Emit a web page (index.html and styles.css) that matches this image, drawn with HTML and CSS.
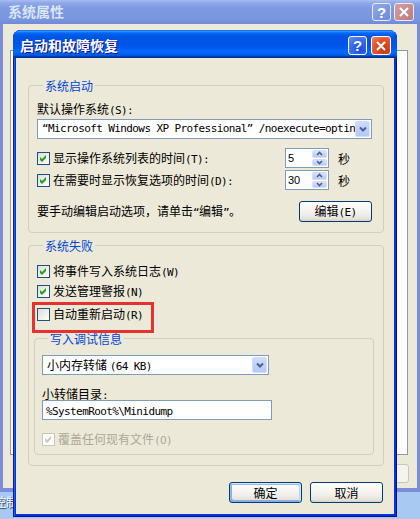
FILE: index.html
```html
<!DOCTYPE html>
<html lang="zh-CN">
<head>
    <meta charset="UTF-8">
    <title>启动和故障恢复</title>
    <link rel="stylesheet" href="styles.css">
</head>
<body>
<div class="desktop">

    <!-- 后面的“系统属性”窗口 (非活动) -->
    <div class="bg-window">
        <div class="bg-titlebar">
            <span class="bg-title">系统属性</span>
            <div class="caption-buttons">
                <span class="cap-btn help">?</span>
                <span class="cap-btn close">
                    <svg width="10" height="10" viewBox="0 0 10 10"><path d="M1 1L9 9M9 1L1 9" stroke="#fff" stroke-width="2"/></svg>
                </span>
            </div>
        </div>
        <div class="bg-client">
            <div class="tab-page"></div>
            <div class="bg-footer"><span class="bg-btn"></span></div>
        </div>
    </div>
    <div class="desk-label">控制面板</div>

    <!-- 启动和故障恢复 对话框 -->
    <div class="dialog">
        <div class="titlebar">
            <span class="title">启动和故障恢复</span>
            <div class="caption-buttons">
                <span class="cap-btn help">?</span>
                <span class="cap-btn close">
                    <svg width="10" height="10" viewBox="0 0 10 10"><path d="M1 1L9 9M9 1L1 9" stroke="#fff" stroke-width="2"/></svg>
                </span>
            </div>
        </div>

        <div class="client">
            <div class="group startup">
                <div class="glabel">系统启动</div>
                <div class="text-line">默认操作系统<span class="en">(S):</span></div>
                <div class="combo wide">
                    <span class="combo-text en">“Microsoft Windows XP Professional” /noexecute=optin</span>
                    <span class="drop-btn">
                        <svg width="8" height="6" viewBox="0 0 8 6"><path d="M1 1.5L4 4.5L7 1.5" fill="none" stroke="#4d6185" stroke-width="2"/></svg>
                    </span>
                </div>

                <div class="row">
                    <span class="cb checked"><svg width="13" height="13" viewBox="0 0 13 13"><polygon points="3,5 5,7 9,3 9,6 5,10 3,8" fill="#21a121"/></svg></span>
                    <span class="row-label">显示操作系统列表的时间<span class="en">(T):</span></span>
                    <span class="spin">
                        <span class="spin-val">5</span>
                        <span class="spin-btns">
                            <span class="spin-btn"><svg width="7" height="5" viewBox="0 0 7 5"><path d="M1 4L3.5 1.5L6 4" fill="none" stroke="#4d6185" stroke-width="1.6"/></svg></span>
                            <span class="spin-btn"><svg width="7" height="5" viewBox="0 0 7 5"><path d="M1 1L3.5 3.5L6 1" fill="none" stroke="#4d6185" stroke-width="1.6"/></svg></span>
                        </span>
                    </span>
                    <span class="unit">秒</span>
                </div>

                <div class="row second">
                    <span class="cb checked"><svg width="13" height="13" viewBox="0 0 13 13"><polygon points="3,5 5,7 9,3 9,6 5,10 3,8" fill="#21a121"/></svg></span>
                    <span class="row-label">在需要时显示恢复选项的时间<span class="en">(D):</span></span>
                    <span class="spin">
                        <span class="spin-val">30</span>
                        <span class="spin-btns">
                            <span class="spin-btn"><svg width="7" height="5" viewBox="0 0 7 5"><path d="M1 4L3.5 1.5L6 4" fill="none" stroke="#4d6185" stroke-width="1.6"/></svg></span>
                            <span class="spin-btn"><svg width="7" height="5" viewBox="0 0 7 5"><path d="M1 1L3.5 3.5L6 1" fill="none" stroke="#4d6185" stroke-width="1.6"/></svg></span>
                        </span>
                    </span>
                    <span class="unit">秒</span>
                </div>

                <div class="row edit-row">
                    <span>要手动编辑启动选项，请单击<span class="en">“</span>编辑<span class="en">”</span>。</span>
                    <button class="btn edit-btn">编辑<span class="en">(E)</span></button>
                </div>
            </div>

            <div class="group failure">
                <div class="glabel">系统失败</div>
                <div class="cb-row first">
                    <span class="cb checked"><svg width="13" height="13" viewBox="0 0 13 13"><polygon points="3,5 5,7 9,3 9,6 5,10 3,8" fill="#21a121"/></svg></span>
                    <span>将事件写入系统日志<span class="en">(W)</span></span>
                </div>
                <div class="cb-row">
                    <span class="cb checked"><svg width="13" height="13" viewBox="0 0 13 13"><polygon points="3,5 5,7 9,3 9,6 5,10 3,8" fill="#21a121"/></svg></span>
                    <span>发送管理警报<span class="en">(N)</span></span>
                </div>
                <div class="cb-row marked">
                    <span class="cb"></span>
                    <span>自动重新启动<span class="en">(R)</span></span>
                </div>

                <div class="group debug">
                    <div class="glabel">写入调试信息</div>
                    <div class="combo small">
                        <span class="combo-text">小内存转储 <span class="en">(64 KB)</span></span>
                        <span class="drop-btn">
                            <svg width="8" height="6" viewBox="0 0 8 6"><path d="M1 1.5L4 4.5L7 1.5" fill="none" stroke="#4d6185" stroke-width="2"/></svg>
                        </span>
                    </div>
                    <div class="text-line dir-label">小转储目录<span class="en">:</span></div>
                    <div class="textbox"><span class="en">%SystemRoot%\Minidump</span></div>
                    <div class="cb-row disabled">
                        <span class="cb checked"><svg width="13" height="13" viewBox="0 0 13 13"><polygon points="3,5 5,7 9,3 9,6 5,10 3,8" fill="#cac8bb"/></svg></span>
                        <span>覆盖任何现有文件<span class="en">(O)</span></span>
                    </div>
                </div>
            </div>

            <div class="dialog-buttons">
                <button class="btn default">确定</button>
                <button class="btn">取消</button>
            </div>
        </div>
    </div>
</div>
</body>
</html>
```

FILE: styles.css
```css
* {
    margin: 0;
    padding: 0;
    box-sizing: border-box;
}

body {
    width: 420px;
    height: 519px;
    overflow: hidden;
    font-family: "Noto Sans CJK SC", sans-serif;
    font-size: 12px;
    line-height: 13px;
    color: #000;
}

.en {
    font-family: "DejaVu Sans Mono", monospace;
    font-size: 11px;
    letter-spacing: -0.6px;
}

.desktop {
    position: relative;
    width: 420px;
    height: 519px;
    background: linear-gradient(#8db5ec, #a8caf2);
}

/* ---- background window ---- */
.bg-window {
    width: 420px;
    height: 492px;
    background: #7b8cdb;
    display: flex;
    flex-direction: column;
}

.bg-titlebar {
    height: 24px;
    display: flex;
    align-items: flex-start;
    padding: 3px 6px 0 8px;
    background: linear-gradient(#a9bef0 0, #8ea8e8 12%, #7d99df 35%, #7a96df 80%, #7089d8 100%);
}

.bg-title {
    flex: 1;
    color: #d8e4f8;
    font-weight: bold;
    font-size: 14px;
    line-height: 17px;
}

.bg-client {
    flex: 1;
    margin: 0 3px 4px;
    background: #ece9d8;
    display: flex;
    flex-direction: column;
}

.tab-page {
    height: 405px;
    margin: 26px 9px 0 7px;
    background: #fcfcfe;
    border: 1px solid #919b9c;
}

.bg-footer {
    display: flex;
    justify-content: flex-end;
    padding: 9px 8px 0 0;
}

.bg-btn {
    width: 75px;
    height: 19px;
    border: 1px solid #c9c7ba;
    border-radius: 3px;
    background: #f4f3ee;
}

.desk-label {
    margin: 3px 0 0 -6px;
    color: #fff;
    font-size: 12px;
    line-height: 14px;
    text-shadow: 1px 1px 1px #1a2a50;
}

/* ---- caption buttons ---- */
.caption-buttons {
    display: flex;
    gap: 3px;
}

.cap-btn {
    display: flex;
    align-items: center;
    justify-content: center;
    width: 19px;
    height: 18px;
    border: 1px solid #e6ecfa;
    border-radius: 3px;
    color: #fff;
    font-family: "Liberation Sans", sans-serif;
    font-weight: bold;
    font-size: 15px;
}

.cap-btn.close {
    width: 20px;
}

.bg-window .cap-btn.help {
    background: linear-gradient(135deg, #93a9e8, #6b88dc);
}

.bg-window .cap-btn.close {
    background: linear-gradient(135deg, #d4a0a2, #bd7a7c);
}

/* ---- dialog ---- */
.dialog {
    position: absolute;
    left: 13px;
    top: 30px;
    width: 384px;
    height: 487px;
    display: flex;
    flex-direction: column;
    background: #0831d9;
    border-radius: 8px 8px 0 0;
    box-shadow: inset -1px -1px #00138c, inset 1px 0 #001ea0, inset 2px 0 #1f5ee6;
}

.titlebar {
    height: 28px;
    display: flex;
    align-items: flex-start;
    padding: 6px 6px 0 7px;
    border-radius: 8px 8px 0 0;
    background: linear-gradient(#0058ee 0%, #3593ff 4%, #288eff 6%, #127dff 8%, #036ffc 10%, #0262ee 14%, #0057e5 20%, #0054e3 24%, #0055eb 56%, #005bf5 66%, #026afe 76%, #0062ef 86%, #0052d6 92%, #0040ab 94%, #003092 100%);
}

.title {
    flex: 1;
    color: #fff;
    font-weight: bold;
    font-size: 14px;
    line-height: 18px;
    text-shadow: 1px 1px #0f1089;
}

.dialog .cap-btn {
    height: 19px;
    border-color: #fff;
}

.dialog .caption-buttons {
    gap: 4px;
}

.dialog .cap-btn.help {
    background: radial-gradient(circle at 70% 75%, #1b4fd8, #3b6fef 60%, #6a94f5);
}

.dialog .cap-btn.close {
    background: radial-gradient(circle at 70% 75%, #c63a12, #e2572f 60%, #ee8a68);
}

.client {
    flex: 1;
    margin: 0 3px 3px;
    background: #ece9d8;
    padding: 27px 10px 0 12px;
}

/* ---- group boxes ---- */
.group {
    border: 1px solid #d0d0bf;
    border-radius: 4px;
}

.glabel {
    width: fit-content;
    height: 13px;
    margin: -7px 0 0 6px;
    padding: 0 2px;
    background: #ece9d8;
    color: #0046d5;
}

.startup {
    padding: 0 11px 10px 8px;
}

.failure {
    margin-top: 12px;
    padding: 0 11px 0 8px;
}

.debug {
    width: 340px;
    margin: 17px 0 10px -3px;
    padding: 0 0 8px 7px;
}

.text-line {
    margin-top: 10px;
    height: 13px;
}

.dir-label {
    margin-top: 12px;
}

/* ---- combo / text boxes ---- */
.combo {
    display: flex;
    height: 20px;
    padding: 1px;
    border: 1px solid #7f9db9;
    background: #fff;
    margin-top: 4px;
}

.combo.small {
    width: 227px;
    margin-top: 10px;
}

.combo-text {
    flex: 1;
    padding-left: 3px;
    white-space: nowrap;
    overflow: hidden;
    line-height: 16px;
}

.drop-btn {
    width: 15px;
    display: flex;
    align-items: center;
    justify-content: center;
    border: 1px solid #d2defb;
    border-radius: 2px;
    background: linear-gradient(#cddbfc, #b4c8f6);
}

.textbox {
    width: 230px;
    height: 20px;
    border: 1px solid #7f9db9;
    background: #fff;
    padding-left: 3px;
    line-height: 18px;
}

/* ---- checkbox rows ---- */
.cb {
    display: inline-block;
    width: 13px;
    height: 13px;
    flex: none;
    border: 1px solid #1c5180;
    background: linear-gradient(135deg, #dcdcd7, #fff);
}

.cb svg {
    display: block;
    margin: -1px;
}

.row {
    display: flex;
    align-items: center;
    height: 20px;
    margin-top: 9px;
}

.row.second {
    margin-top: 2px;
}

.row-label {
    flex: 1;
    margin-left: 3px;
}

.spin {
    display: flex;
    width: 44px;
    height: 20px;
    border: 1px solid #7f9db9;
    background: #fff;
}

.spin-val {
    flex: 1;
    padding-left: 2px;
    font-family: "Liberation Sans", sans-serif;
    font-size: 11px;
    line-height: 18px;
}

.spin-btns {
    width: 16px;
    display: flex;
    flex-direction: column;
    gap: 1px;
    padding: 1px 1px 1px 0;
}

.spin-btn {
    flex: 1;
    display: flex;
    align-items: center;
    justify-content: center;
    border: 1px solid #d2defb;
    border-radius: 2px;
    background: linear-gradient(#d6e1fd, #b7caf6);
}

.unit {
    margin: 0 22px 0 9px;
}

.edit-row {
    height: 21px;
    margin-top: 11px;
    justify-content: space-between;
}

.cb-row {
    display: flex;
    align-items: center;
    gap: 3px;
    height: 13px;
    margin-top: 7px;
}

.cb-row.first {
    margin-top: 13px;
}

.cb-row.marked {
    position: relative;
    margin-top: 10px;
}

.cb-row.marked::after {
    content: "";
    position: absolute;
    left: -5px;
    top: -6px;
    width: 116px;
    height: 25px;
    border: 3px solid #e5322e;
}

.cb-row.disabled {
    margin-top: 13px;
    color: #aca899;
}

.cb-row.disabled .cb {
    border-color: #cac8bb;
    background: #fff;
}

/* ---- push buttons ---- */
.btn {
    width: 73px;
    height: 21px;
    border: 1px solid #003c74;
    border-radius: 3px;
    background: linear-gradient(#fff, #f1f0eb 60%, #e5e3da 88%, #d6d0c5);
    font-family: "Noto Sans CJK SC", sans-serif;
    font-size: 12px;
    line-height: 13px;
    color: #000;
}

.btn.default {
    box-shadow: inset -1px 1px #cee7ff, inset 1px 2px #98b8ea, inset -2px 2px #bcd4f6, inset 1px -1px #89ade4, inset 2px -2px #89ade4;
}

.dialog-buttons {
    display: flex;
    justify-content: flex-end;
    gap: 8px;
    margin-top: 16px;
    padding-right: 1px;
}
```
